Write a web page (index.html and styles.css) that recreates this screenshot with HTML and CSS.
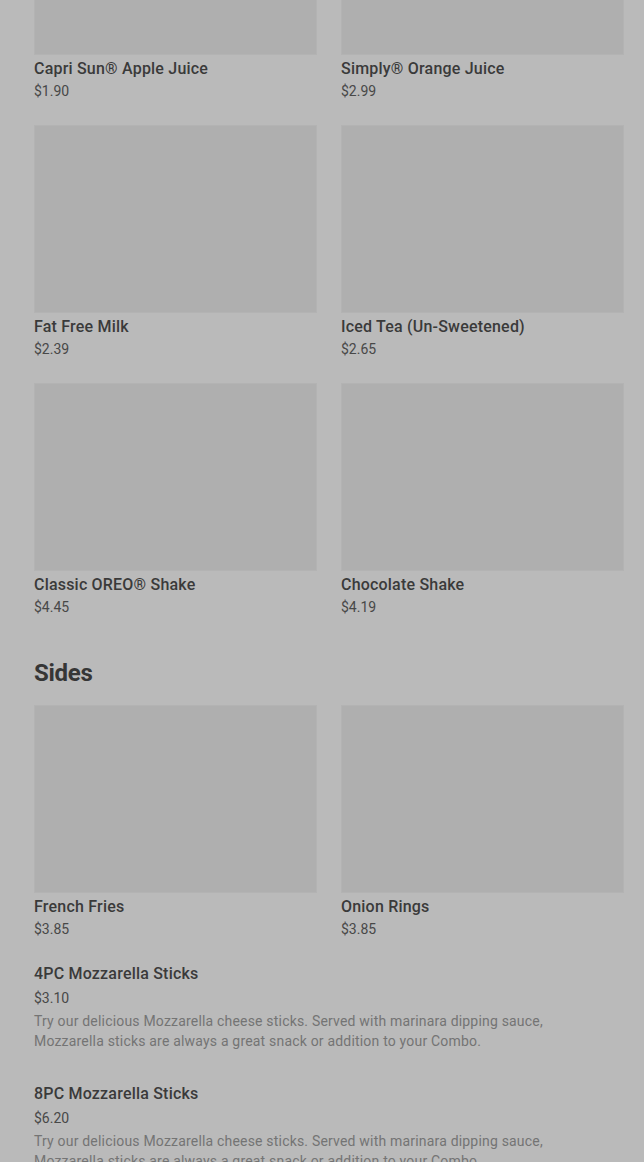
FILE: index.html
```html
<!DOCTYPE html>
<html lang="en">
<head>
<meta charset="UTF-8" />
<meta name="viewport" content="width=device-width, initial-scale=1" />
<title>Menu</title>
<link rel="stylesheet" href="styles.css">
</head>
<body>

<div class="menu">
  <section class="menu-section drinks">
    <div class="item-grid">
      <div class="item-card">
        <div class="item-image"></div>
        <div class="item-name">Capri Sun® Apple Juice</div>
        <div class="item-price">$1.90</div>
      </div>
      <div class="item-card">
        <div class="item-image"></div>
        <div class="item-name">Simply® Orange Juice</div>
        <div class="item-price">$2.99</div>
      </div>
      <div class="item-card">
        <div class="item-image"></div>
        <div class="item-name">Fat Free Milk</div>
        <div class="item-price">$2.39</div>
      </div>
      <div class="item-card">
        <div class="item-image"></div>
        <div class="item-name">Iced Tea (Un-Sweetened)</div>
        <div class="item-price">$2.65</div>
      </div>
      <div class="item-card">
        <div class="item-image"></div>
        <div class="item-name">Classic OREO® Shake</div>
        <div class="item-price">$4.45</div>
      </div>
      <div class="item-card">
        <div class="item-image"></div>
        <div class="item-name">Chocolate Shake</div>
        <div class="item-price">$4.19</div>
      </div>
    </div>
  </section>

  <section class="menu-section">
    <h2 class="section-title">Sides</h2>
    <div class="item-grid">
      <div class="item-card">
        <div class="item-image"></div>
        <div class="item-name">French Fries</div>
        <div class="item-price">$3.85</div>
      </div>
      <div class="item-card">
        <div class="item-image"></div>
        <div class="item-name">Onion Rings</div>
        <div class="item-price">$3.85</div>
      </div>
    </div>

    <div class="item-list">
      <div class="list-item">
        <div class="item-name">4PC Mozzarella Sticks</div>
        <div class="item-price">$3.10</div>
        <p class="item-desc">Try our delicious Mozzarella cheese sticks. Served with marinara dipping sauce, Mozzarella sticks are always a great snack or addition to your Combo.</p>
      </div>
      <div class="list-item">
        <div class="item-name">8PC Mozzarella Sticks</div>
        <div class="item-price">$6.20</div>
        <p class="item-desc">Try our delicious Mozzarella cheese sticks. Served with marinara dipping sauce, Mozzarella sticks are always a great snack or addition to your Combo.</p>
      </div>
    </div>
  </section>
</div>

</body>
</html>
```

FILE: styles.css
```css
body {
  margin: 0;
  background: #bababa;
  font-family: Roboto, 'Liberation Sans', Arial, sans-serif;
  color: #3b3b3b;
  overflow: hidden;
}
.menu {
  padding: 0 20px 0 34px;
  margin-top: -133px;
}
.item-grid {
  display: grid;
  grid-template-columns: 283px 283px;
  column-gap: 24px;
  row-gap: 22px;
}
.item-image {
  height: 188px;
  background: #afafaf;
  box-shadow: inset 0 0 0 1px #b3b3b3;
}
.item-name {
  padding-top: 2px;
  font-size: 16px;
  font-weight: 500;
  line-height: 23px;
  letter-spacing: 0.2px;
  color: #3a3a3a;
}
.item-price {
  font-size: 14px;
  line-height: 23px;
  color: #484848;
}
.section-title {
  margin: 38px 0 16px;
  font-size: 24px;
  font-weight: 700;
  line-height: 32px;
  letter-spacing: -0.3px;
  color: #363636;
}
.item-list {
  margin-top: 19px;
}
.list-item {
  margin-bottom: 29px;
}
.list-item .item-name {
  line-height: 24px;
}
.list-item .item-price {
  line-height: 25px;
}
.item-desc {
  margin: 0;
  max-width: 560px;
  font-size: 14px;
  line-height: 20px;
  letter-spacing: 0.19px;
  color: #747474;
}
```
